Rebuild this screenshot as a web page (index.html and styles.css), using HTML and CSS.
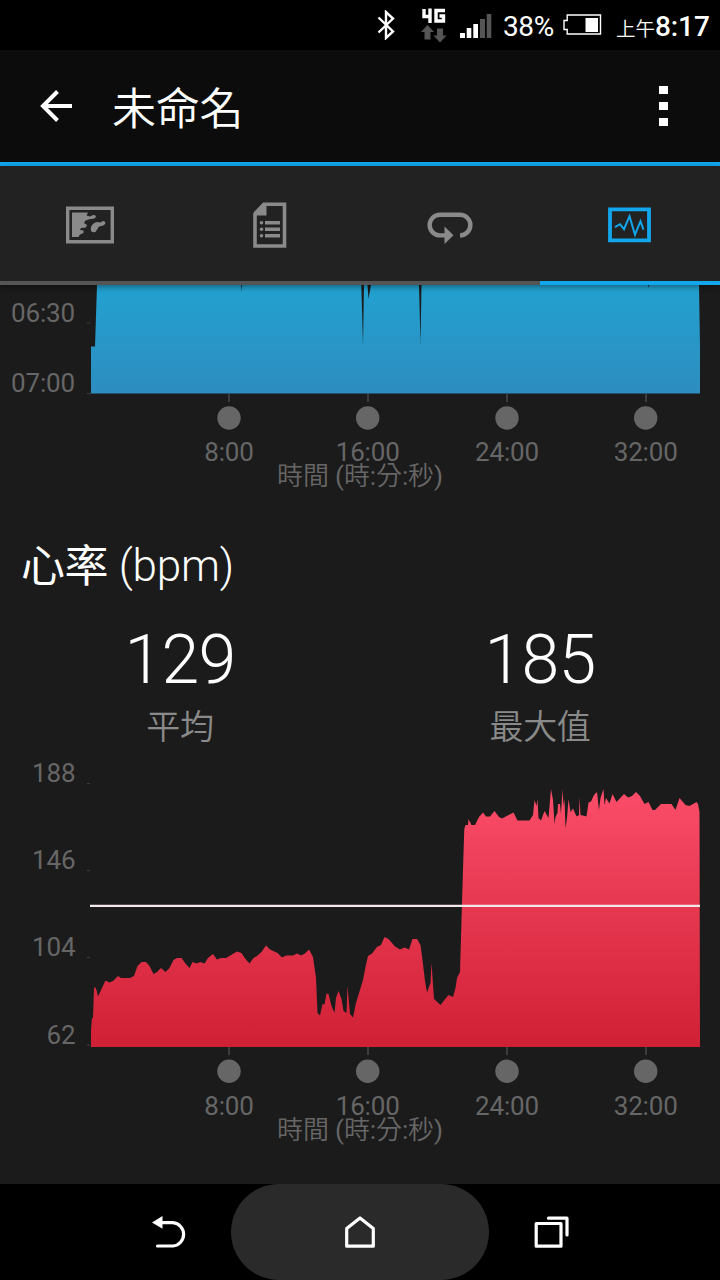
FILE: index.html
```html
<!DOCTYPE html>
<html lang="zh-Hant">
<head>
<meta charset="utf-8">
<title>未命名</title>
<link rel="stylesheet" href="styles.css">
</head>
<body>
<div class="status">
  <svg class="bluetooth" width="18" height="30" viewBox="0 0 18 30"><path d="M1.500 7.500 16 21.500 9 28V2L16 8.500 1.500 22.500" fill="none" stroke="#fff" stroke-width="2.400"/></svg>
  <svg class="network" width="26" height="36" viewBox="0 0 26 36">
    <path d="M3 1V8.500H9.500M9 0.500V15M24 2.500H15V13H22.500V8H18.500" fill="none" stroke="#fff" stroke-width="3.400"/>
    <path d="M6.500 17 13 24H9.500V31.500H3.500V24H0ZM19 34.500 12.500 27.500H16V20.500H22V27.500H25.500Z" fill="#555"/>
  </svg>
  <svg class="signal" width="32" height="25" viewBox="0 0 32 25">
    <path d="M0 19h5v5H0zM6.700 14h4.600v10H6.700zM13.300 10h4.700v14h-4.700z" fill="#fff"/>
    <path d="M20 5h5v19h-5zM26.700 0h4.600v24h-4.600z" fill="#555"/>
  </svg>
  <span class="percent">38%</span>
  <svg class="battery" width="39" height="22" viewBox="0 0 39 22"><path d="M4.200 1h33.300v19H4.200v-4.500H1v-9h3.200z" fill="none" stroke="#fff" stroke-width="1.400"/><path d="M22.500 4h12.500v14H22.500z" fill="#fff"/></svg>
  <span class="clock"><span class="ampm">上午</span><b>8:17</b></span>
</div>
<header class="appbar">
  <svg width="34" height="34" viewBox="0 0 34 34"><path d="M33 17H4M18.500 2.500 4 17l14.500 14.500" fill="none" stroke="#fff" stroke-width="4"/></svg>
  <h1 class="title">未命名</h1>
  <svg class="more" width="10" height="42" viewBox="0 0 10 42"><path d="M0 1h9v8H0zM0 17h9v8H0zM0 33h9v8H0z" fill="#fff"/></svg>
</header>
<nav class="tabs">
  <div class="tab"><svg width="48" height="38" viewBox="0 0 48 38">
    <path d="M1.700 2.200h44.600v33.600H1.700z" fill="none" stroke="#8a8a8a" stroke-width="3.400"/>
    <path d="M6 6.500H22L20.500 9.500 24 10.500 27 9Q30 8.500 30 11 28.500 13.500 24 13L19.500 14.500 18 17 21 19 20 21.500 15 22 14 24 17.500 24.500V27L14 28.500 12.500 31H6ZM27 18Q30 15 34.500 16.500L37 15Q39 15 39.500 17 39 19.500 33 20.500L29.500 26Q27 27 25 25 24 21 27 18Z" fill="#8a8a8a"/></svg></div>
  <div class="tab"><svg width="34" height="46" viewBox="0 0 34 46">
    <path d="M2 12V44H31.500V2.200H11Z" fill="none" stroke="#8a8a8a" stroke-width="3.600"/>
    <path d="M1 13.500V10L10 1H13.500V13.500ZM12 19h15v3.500H12zM12 25.500h15V29H12zM12 32h15v3.500H12z" fill="#8a8a8a"/>
    <g fill="#8a8a8a"><circle cx="8.500" cy="20.700" r="1.800"/><circle cx="8.500" cy="27.300" r="1.800"/><circle cx="8.500" cy="33.800" r="1.800"/></g></svg></div>
  <div class="tab"><svg class="lap" width="46" height="32" viewBox="0 0 46 32">
    <path d="M18 23.400H13A10.300 10.300 0 0 1 13 2.700H33A10.300 10.300 0 0 1 33 23.400" fill="none" stroke="#8a8a8a" stroke-width="4.400"/><path d="M17.500 14.500V32L26.500 23.200Z" fill="#8a8a8a"/></svg></div>
  <div class="tab active"><svg width="44" height="36" viewBox="0 0 44 36">
    <path d="M2 2.300h39v31h-39z" fill="none" stroke="#12a6ed" stroke-width="3.800"/><path d="M7 20.200 12 17.200 16 22.200 21.500 9.200 27 27.700 32.500 14.200 35.500 22.700" fill="none" stroke="#12a6ed" stroke-width="2"/></svg></div>
</nav>
<main class="content">
  <svg class="chart" width="720" height="215" viewBox="0 285 720 215">
    <defs><linearGradient id="pace" gradientUnits="userSpaceOnUse" x1="0" y1="285" x2="0" y2="393"><stop offset="0" stop-color="#22a1d0"/><stop offset="1" stop-color="#2d8dc0"/></linearGradient></defs>
    <path fill="url(#pace)" d="M91 393.500V346.500H95L97 285H241L241.500 291 242 285H361.300L363 345 364 285H367.500L368.500 299 371 285H419L420.500 344 421.500 285H648L648.500 288 649 285H699L700 346V393.500Z"/>
    <path class="tick" d="M229 394v8M368 394v8M507 394v8M646 394v8"/>
    <path class="tick thin" d="M87 323h3M87 393.500h4"/>
    <g class="dot"><circle cx="229" cy="418" r="11.700"/><circle cx="367.700" cy="418" r="11.700"/><circle cx="507" cy="418" r="11.700"/><circle cx="645.700" cy="418" r="11.700"/></g>
    <g class="label end"><text x="75" y="322">06:30</text><text x="75" y="392">07:00</text></g>
    <g class="label mid"><text x="229" y="461.300">8:00</text><text x="367.700" y="461.300">16:00</text><text x="507" y="461.300">24:00</text><text x="645.700" y="461.300">32:00</text><text class="caption" x="360" y="485">時間 <tspan class="latin">(</tspan>時<tspan class="latin">:</tspan>分<tspan class="latin">:</tspan>秒<tspan class="latin">)</tspan></text></g>
  </svg>
  <h2 class="heading"><span class="cjk">心率</span> (bpm)</h2>
  <section class="stats">
    <div class="stat"><div class="value">129</div><div class="name">平均</div></div>
    <div class="stat"><div class="value">185</div><div class="name">最大值</div></div>
  </section>
  <svg class="chart" width="720" height="400" viewBox="0 755 720 400">
    <defs><linearGradient id="heart" gradientUnits="userSpaceOnUse" x1="0" y1="790" x2="0" y2="1047"><stop offset="0" stop-color="#fb4c69"/><stop offset="1" stop-color="#cf2035"/></linearGradient></defs>
    <path fill="url(#heart)" d="M91 1047V1030L92 1018 93 1018 94 988 95 987 96.500 990 98 996.500 102 988 105.500 980.500 109.500 982.500 113 981 118 976 121 978 130 978 134 976 137.500 966 141.500 962 146 962 149.500 966 153.500 974 157 972 161 968 165.500 972 169.500 968 173.500 960 177 958 181.500 958 185 963 189.500 968 192.500 962 196.500 963.500 200.500 962 204.500 963.500 208 958 213 954 217 959.500 221 958 226 958 237 951.500 241.500 953 245.500 959 249.500 963.500 253.500 958 257 956 261.500 952 266 945.500 270 949.500 277.500 953 282 957.500 286 955.500 293 955.500 297 953.500 301 955.500 305 953.500 309 949.500 313 957 316 978 317.500 1013 320 1015.500 322.500 1004 324.500 1004.500 326.500 993.500 328.500 994 331.500 1006 334.500 1013 336 998 338.500 991 341.500 999 343.500 1011 346.500 1013 347.500 986 350 1014 353 1017.500 356 1003 363 980 365.500 967 368 956 372 953.500 377 947 381 945 384.500 937 388.500 939 395 946.500 400 949.500 404.500 947.500 409 949.500 412.500 939 417 939 420.500 945 422.500 960 425 981 427 992.500 430.500 983 431.500 963 434 999 440.500 1005 446 998 448.500 995 453 997 455.500 988 457 978 460 972 461.500 920 463 870 464.300 829 465.500 825 468 825 468.500 819 471.500 825 475 825 479 817 483 812.500 486 816.500 490 816.500 494.500 811 499 817 502 818.500 513.500 812.500 517.500 820.500 529.500 820.500 533 815 534.500 800 536.500 806 537.500 799 538.500 818 541 820.500 544.500 811 548.500 818 551 789 553 800 554.500 824 555.500 817 557.500 813 558 804 560 804 561 814 562.500 789 563.500 806 564.500 799 565.500 828 567 818 568.500 799 570.500 812 573 808.500 576.500 816.500 579 815 579.500 797 580.500 815 586.500 816.500 588.500 802.500 591 801.500 594 795 597 792 599 810 600.500 798 603.500 789 604.500 805 606 798 609.500 803.500 612.500 794 616.500 802 624 794 628 797.500 632 796 636 792 640 796 644.500 804 648.500 802 652.500 810 655 810 661 804 671.500 804 675.500 810 679.500 798 685.500 805 689.500 806 696.500 802 698 804 699.500 812 700 1047Z"/>
    <path class="tick" d="M229 1047v8M368 1047v8M507 1047v8M646 1047v8"/>
    <path class="tick thin" d="M87 783.500h3M87 870.500h3M87 957.500h3M87 1045h3"/>
    <path d="M90 905.800H700" stroke="#f4e8ea" stroke-width="2.300"/>
    <g class="dot"><circle cx="229" cy="1071.300" r="11.700"/><circle cx="367.700" cy="1071.300" r="11.700"/><circle cx="507" cy="1071.300" r="11.700"/><circle cx="645.700" cy="1071.300" r="11.700"/></g>
    <g class="label end"><text x="75.500" y="782">188</text><text x="75.500" y="869">146</text><text x="75.500" y="956">104</text><text x="75.500" y="1043.500">62</text></g>
    <g class="label mid"><text x="229" y="1114.500">8:00</text><text x="367.700" y="1114.500">16:00</text><text x="507" y="1114.500">24:00</text><text x="645.700" y="1114.500">32:00</text><text class="caption" x="360" y="1138.500">時間 <tspan class="latin">(</tspan>時<tspan class="latin">:</tspan>分<tspan class="latin">:</tspan>秒<tspan class="latin">)</tspan></text></g>
  </svg>
</main>
<footer class="navbar">
  <div class="key back"><svg width="36" height="34" viewBox="0 0 36 34"><path d="M5.500 31H21A11.700 11.700 0 0 0 21 7.700H9" fill="none" stroke="#fff" stroke-width="3.200" stroke-linecap="round"/><path d="M0 7.500 10.500 1V13.800Z" fill="#fff"/></svg></div>
  <div class="key home"><svg width="30" height="34" viewBox="0 0 30 34"><path d="M1.700 31.200V13.500L15 3 28.300 13.500V31.200Z" fill="none" stroke="#fff" stroke-width="3.200" stroke-linejoin="round"/></svg></div>
  <div class="key recent"><svg width="36" height="34" viewBox="0 0 36 34"><path d="M2.200 8.500H27V31.200H2.200ZM14.500 3.200H33V20" fill="none" stroke="#fff" stroke-width="3.200" stroke-linejoin="round" stroke-linecap="round"/></svg></div>
</footer>
</body>
</html>
```

FILE: styles.css
```css
* { box-sizing: border-box; }
body { margin: 0; width: 720px; height: 1280px; overflow: hidden; display: flex; flex-direction: column; background: #1b1b1b; color: #fff; font-family: Roboto, "Noto Sans CJK TC", sans-serif; }
svg { display: block; flex: none; }
h1, h2 { margin: 0; }
.status { height: 50px; flex: none; background: #000; display: flex; align-items: flex-start; padding-left: 377px; white-space: nowrap; }
.bluetooth { margin-top: 10px; }
.network { margin: 8px 0 0 26px; }
.signal { margin: 14px 0 0 13px; }
.percent { margin: 10px 0 0 11px; width: 53px; font-size: 28px; line-height: 33px; letter-spacing: -0.4px; }
.battery { margin: 14px 0 0 7px; }
.clock { margin: 10px 0 0 14px; font-size: 28px; line-height: 33px; display: flex; align-items: baseline; }
.clock b { font-weight: 500; letter-spacing: -0.1px; }
.ampm { font-size: 19.500px; font-weight: 350; }
.appbar { height: 116px; flex: none; background: #0c0c0c; border-bottom: 4px solid #12a6ed; display: flex; align-items: center; padding: 0 51px 0 39px; }
.title { margin-left: 39px; padding-top: 8px; font-size: 44px; font-weight: 350; line-height: 60px; letter-spacing: -0.2px; flex: 1; }
.tabs { height: 119px; flex: none; background: #222; display: flex; position: relative; z-index: 1; box-shadow: 0 2px 6px rgba(0,0,0,.4); }
.tab { flex: 1; border-bottom: 4px solid #555; display: flex; align-items: center; justify-content: center; padding-top: 3px; }
.tab.active { border-color: #12a6ed; }
.lap { margin-top: 6px; }
.content { height: 899px; flex: none; }
.tick { stroke: #3c3c3c; stroke-width: 2; fill: none; }
.thin { stroke-width: 1; }
.dot { fill: #666; }
.label { font-size: 26px; fill: #666; letter-spacing: -0.15px; }
.end { text-anchor: end; }
.mid { text-anchor: middle; }
.caption { font-weight: 350; letter-spacing: -0.1px; }
.latin { font-weight: 400; }
.heading { height: 110px; padding: 36px 21px 0; font-size: 44px; line-height: 60px; font-weight: 300; letter-spacing: -0.2px; }
.cjk { font-weight: 400; letter-spacing: -0.4px; vertical-align: -1px; }
.stats { height: 145px; display: flex; }
.stat { flex: 1; text-align: center; }
.value { padding: 10px 0 0; font-size: 68px; line-height: 80px; font-weight: 300; letter-spacing: -0.8px; }
.name { margin-top: 3px; font-size: 34px; line-height: 48px; font-weight: 350; color: #8a8a8a; letter-spacing: -0.3px; }
.navbar { height: 96px; flex: none; background: #000; display: flex; align-items: center; }
.key { height: 96px; display: flex; align-items: center; justify-content: center; }
.back { width: 231px; padding-left: 108px; }
.home { width: 258px; background: #2a2a2a; border-radius: 48px; }
.recent { width: 231px; padding-right: 105px; }
```
